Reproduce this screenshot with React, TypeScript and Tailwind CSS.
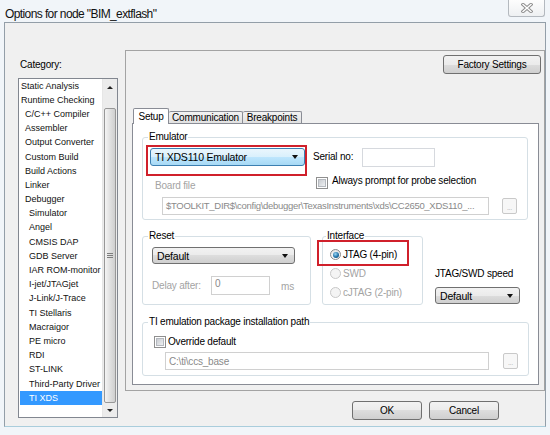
import React from "react";
import clsx from "clsx";

const items: [string, number][] = [
  ["Static Analysis", 0],
  ["Runtime Checking", 0],
  ["C/C++ Compiler", 1],
  ["Assembler", 1],
  ["Output Converter", 1],
  ["Custom Build", 1],
  ["Build Actions", 1],
  ["Linker", 1],
  ["Debugger", 1],
  ["Simulator", 2],
  ["Angel", 2],
  ["CMSIS DAP", 2],
  ["GDB Server", 2],
  ["IAR ROM-monitor", 2],
  ["I-jet/JTAGjet", 2],
  ["J-Link/J-Trace", 2],
  ["TI Stellaris", 2],
  ["Macraigor", 2],
  ["PE micro", 2],
  ["RDI", 2],
  ["ST-LINK", 2],
  ["Third-Party Driver", 2],
  ["TI XDS", 2],
];

const indent = ["pl-[1px]", "pl-[5px]", "pl-[9px]"];

function DownArrow() {
  return (
    <div className="h-0 w-0 border-t-[4px] border-r-[3.5px] border-l-[3.5px] border-t-[#111] border-r-transparent border-l-transparent" />
  );
}

function Combo({ text, className, active }: { text: string; className: string; active?: boolean }) {
  return (
    <div
      className={clsx(
        "flex items-center justify-between rounded-[3px] border pr-[6px] pl-[4px] text-[10.5px]",
        active
          ? "border-[#3c7fb1] bg-[linear-gradient(#eaf6fd,#d9f0fc_50%,#bee6fd_50%,#a7d9f5)]"
          : "border-[#707070] bg-[linear-gradient(#f2f2f2,#ebebeb_50%,#dddddd_50%,#cfcfcf)]",
        className
      )}
    >
      <span className="leading-[12px]">{text}</span>
      <DownArrow />
    </div>
  );
}

function Button({ text, className }: { text: string; className: string }) {
  return (
    <div
      className={clsx(
        "flex items-center justify-center rounded-[3px] border border-[#707070] bg-[linear-gradient(#f2f2f2,#ebebeb_50%,#dddddd_50%,#cfcfcf)] leading-[12px]",
        className
      )}
    >
      {text}
    </div>
  );
}

function Ellipsis() {
  return (
    <div className="flex h-[16px] w-[15px] items-end justify-center rounded-[2px] border border-[#c9c9c9] bg-[#f7f7f7] pb-[2px] text-[7px] leading-[7px] text-[#b0b0b0]">
      ...
    </div>
  );
}

function Checkbox() {
  return (
    <div className="h-[12px] w-[12px] shrink-0 border border-[#8f8f8f] bg-white p-[1px]">
      <div className="h-full w-full border border-[#b5b9bf] bg-[linear-gradient(135deg,#c9ccd1,#eef0f2)]" />
    </div>
  );
}

function Radio({ checked, disabled }: { checked?: boolean; disabled?: boolean }) {
  return (
    <div
      className={clsx(
        "flex h-[11px] w-[11px] shrink-0 items-center justify-center rounded-full border",
        disabled ? "border-[#c8c8c8] bg-[#f4f4f4]" : "border-[#8a8a8a] bg-[linear-gradient(#e6e6e6,#ffffff)]"
      )}
    >
      {checked && (
        <div className="h-[6px] w-[6px] rounded-full bg-[radial-gradient(circle_at_40%_35%,#9ed8f5,#2273a8_55%,#0d3a5e)]" />
      )}
    </div>
  );
}

function CategoryList() {
  return (
    <div className="ml-[13px] flex h-[340px] w-[100px] border border-[#828790] bg-white text-[9px] tracking-normal">
      <div className="flex w-[83px] flex-col">
        {items.map(([name, level]) => {
          const selected = name === "TI XDS";
          return (
            <div
              key={name}
              className={clsx(
                "ml-[1px] flex h-[14.2px] items-center whitespace-nowrap",
                indent[level],
                selected ? "bg-[#3399ff] text-white" : "text-[#111]"
              )}
            >
              <span className="leading-[11px]">{name}</span>
            </div>
          );
        })}
      </div>
      {/* scroll bar */}
      <div className="flex w-[15px] flex-col border-l border-[#e6e6e6] bg-[#ececec]">
        <div className="flex h-[16px] items-center justify-center">
          <div className="h-0 w-0 border-r-[3px] border-b-[3px] border-l-[3px] border-r-transparent border-b-[#222] border-l-transparent" />
        </div>
        <div className="mt-[13px] ml-[1px] flex h-[295px] w-[12px] items-center justify-center rounded-[2px] border border-[#979797] bg-[linear-gradient(90deg,#f4f4f4,#e2e2e2_45%,#cfcfcf)]">
          <div className="flex flex-col gap-[1px]">
            <div className="h-[1px] w-[6px] bg-[#7d7d7d]" />
            <div className="h-[1px] w-[6px] bg-[#7d7d7d]" />
            <div className="h-[1px] w-[6px] bg-[#7d7d7d]" />
          </div>
        </div>
        <div className="flex flex-1 items-center justify-center">
          <div className="h-0 w-0 border-t-[3px] border-r-[3px] border-l-[3px] border-t-[#222] border-r-transparent border-l-transparent" />
        </div>
      </div>
    </div>
  );
}

function SetupTab() {
  return (
    <div className="flex flex-col pt-[7px] pl-[9px]">
      {/* Emulator */}
      <fieldset className="w-[386px] rounded-[3px] border border-[#d5dfe5] pb-[4px]">
        <legend className="ml-[5px] px-[1px] leading-[12px]">Emulator</legend>
        <div className="relative mt-[2px] flex h-[30px] items-start">
          <div className="pointer-events-none absolute top-0 left-[3px] h-[31px] w-[161px] border-2 border-[#d0202b]" />
          <Combo text="TI XDS110 Emulator" active className="mt-[3px] ml-[7px] h-[18px] w-[155px]" />
          <span className="mt-[6px] ml-[8px] w-[49px] leading-[12px]">Serial no:</span>
          <div className="mt-[3px] h-[19px] w-[73px] border border-[#d6d9de] bg-white" />
        </div>
        <div className="flex h-[17px]">
          <div className="w-[173px] pt-[5px] pl-[12px] leading-[12px] text-[#a3a3a3]">Board file</div>
          <div className="mt-[2px]">
            <Checkbox />
          </div>
          <span className="ml-[4px] leading-[12px]">Always prompt for probe selection</span>
        </div>
        <div className="mt-[5px] flex items-start">
          <div className="ml-[19px] flex h-[18px] w-[327px] items-center border border-[#d0d0d0] bg-white pl-[3px] text-[9.5px] tracking-[-0.3px] whitespace-nowrap text-[#8a8a8a]">
            $TOOLKIT_DIR$\config\debugger\TexasInstruments\xds\CC2650_XDS110_...
          </div>
          <div className="mt-[1px] ml-[13px]">
            <Ellipsis />
          </div>
        </div>
      </fieldset>

      {/* Reset / Interface / speed */}
      <div className="mt-[10px] flex items-start">
        <fieldset className="w-[169px] rounded-[3px] border border-[#d5dfe5] pb-[9px]">
          <legend className="ml-[5px] px-[1px] leading-[12px]">Reset</legend>
          <Combo text="Default" className="mt-[5px] ml-[9px] h-[17px] w-[143px]" />
          <div className="mt-[12px] flex h-[19px] items-center">
            <span className="ml-[9px] w-[59px] leading-[12px] text-[#a3a3a3]">Delay after:</span>
            <div className="flex h-[19px] w-[59px] items-start border border-[#d0d0d0] bg-white pt-[1px] pl-[3px] leading-[12px] text-[#8a8a8a]">
              0
            </div>
            <span className="mt-[3px] ml-[11px] leading-[12px] text-[#a3a3a3]">ms</span>
          </div>
        </fieldset>

        <fieldset className="ml-[11px] w-[101px] rounded-[3px] border border-[#d5dfe5] pb-[2px]">
          <legend className="ml-[3px] px-[1px] leading-[12px]">Interface</legend>
          <div className="flex flex-col pt-[3px]">
            <div className="relative flex h-[19px] items-center pl-[7px]">
              <div className="pointer-events-none absolute top-[-5px] left-[-6px] h-[26px] w-[92px] border-2 border-[#d0202b]" />
              <Radio checked />
              <span className="ml-[2px] leading-[12px]">JTAG (4-pin)</span>
            </div>
            <div className="flex h-[19px] items-center pl-[7px] text-[#a3a3a3]">
              <Radio disabled />
              <span className="ml-[2px] leading-[12px]">SWD</span>
            </div>
            <div className="flex h-[19px] items-center pl-[7px] text-[#a3a3a3]">
              <Radio disabled />
              <span className="ml-[2px] leading-[12px]">cJTAG (2-pin)</span>
            </div>
          </div>
        </fieldset>

        <div className="ml-[12px] flex flex-col pt-[38px]">
          <span className="leading-[12px]">JTAG/SWD speed</span>
          <Combo text="Default" className="mt-[7px] h-[17px] w-[85px]" />
        </div>
      </div>

      {/* TI emulation package */}
      <fieldset className="mt-[11px] w-[387px] rounded-[3px] border border-[#d5dfe5] pb-[5px]">
        <legend className="ml-[5px] px-[1px] leading-[12px]">TI emulation package installation path</legend>
        <div className="mt-[8px] ml-[11px] flex items-center">
          <Checkbox />
          <span className="ml-[2px] leading-[12px]">Override default</span>
        </div>
        <div className="mt-[4px] flex items-center">
          <div className="ml-[22px] flex h-[18px] w-[324px] items-center border border-[#d0d0d0] bg-white pl-[3px] text-[#8a8a8a]">
            C:\ti\ccs_base
          </div>
          <div className="ml-[14px]">
            <Ellipsis />
          </div>
        </div>
      </fieldset>
    </div>
  );
}

export default function App() {
  return (
    <div className="flex h-[435px] w-[550px] flex-col overflow-hidden bg-[#f1f5f9] font-['Liberation_Sans',Arial,sans-serif] text-[10px] tracking-[-0.2px] text-black">
      {/* title bar */}
      <div className="flex h-[22px] shrink-0 items-start">
        <span className="mt-[7px] pl-[5px] text-[12px] leading-[14px] tracking-[-0.6px] text-[#111]">
          Options for node "BIM_extflash"
        </span>
        <div className="mr-[5px] ml-auto flex h-[17px] w-[37px] items-center justify-center rounded-b-[3px] border border-t-0 border-[#b4b9bf] bg-[linear-gradient(#fdfdfd,#eef0f2)]">
          <svg width="12" height="10" viewBox="0 0 12 10">
            <path d="M2 1.5 L10 8.5 M10 1.5 L2 8.5" stroke="#8e8e8e" strokeWidth="3.4" strokeLinecap="square" />
            <path d="M2 1.5 L10 8.5 M10 1.5 L2 8.5" stroke="#ffffff" strokeWidth="1.4" strokeLinecap="square" />
          </svg>
        </div>
      </div>

      {/* client area */}
      <div className="mx-[4px] flex h-[405px] shrink-0 border border-[#939ea8] border-b-[#a9cddc] bg-[#f0f0f0]">
        <div className="flex w-[120px] shrink-0 flex-col">
          <span className="mt-[35px] mb-[7px] pl-[15px] leading-[13px]">Category:</span>
          <CategoryList />
        </div>

        <div className="flex w-[420px] flex-col">
          <div className="mt-[27px] flex h-[341px] w-[420px] flex-col border border-[#a3a3a3]">
            <Button text="Factory Settings" className="mt-[4px] mr-[3px] h-[19px] w-[98px] self-end" />
            <div className="mt-[34px] ml-[6px] flex h-[15px] items-end pl-[1px]">
              <div className="relative z-10 -mb-[1px] flex h-[16px] w-[36px] items-center justify-center rounded-t-[2px] border border-b-0 border-[#898c95] bg-white leading-[12px]">
                Setup
              </div>
              <div className="flex h-[12px] w-[74px] items-center justify-center rounded-t-[2px] border border-b-0 border-l-0 border-[#898c95] bg-[linear-gradient(#f2f2f2,#e1e1e1)] leading-[12px]">
                Communication
              </div>
              <div className="flex h-[12px] w-[59px] items-center justify-center rounded-t-[2px] border border-b-0 border-l-0 border-[#898c95] bg-[linear-gradient(#f2f2f2,#e1e1e1)] leading-[12px]">
                Breakpoints
              </div>
            </div>
            <div className="ml-[6px] h-[262px] w-[407px] border border-[#898c95] bg-white">
              <SetupTab />
            </div>
          </div>

          <div className="mt-[10px] flex gap-[7px] pl-[227px]">
            <Button text="OK" className="h-[19px] w-[70px]" />
            <Button text="Cancel" className="h-[19px] w-[70px]" />
          </div>
        </div>
      </div>
    </div>
  );
}
